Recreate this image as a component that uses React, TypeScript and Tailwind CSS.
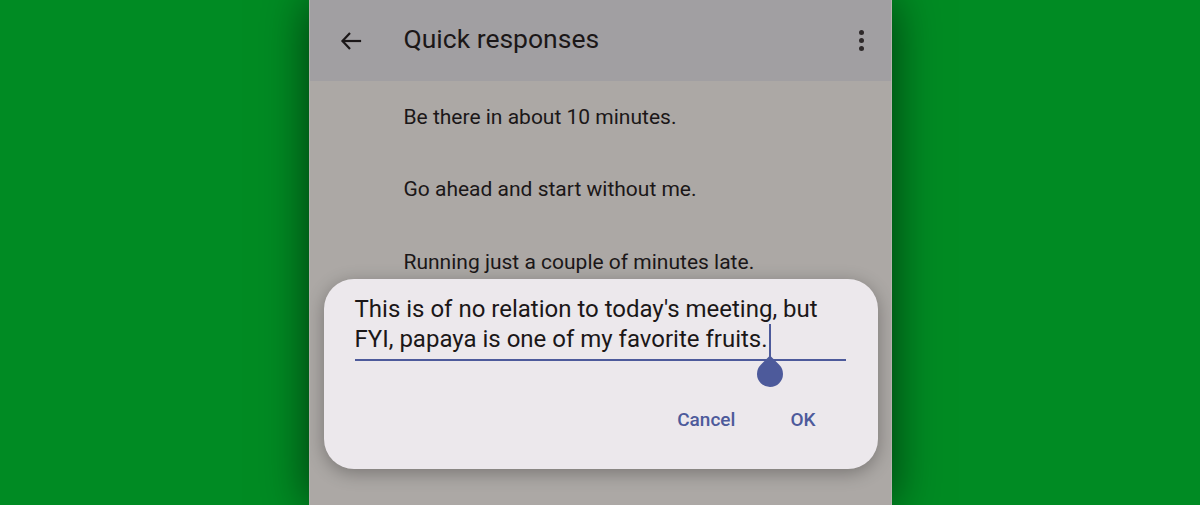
import React from "react";

export default function App() {
  const items = [
    "Be there in about 10 minutes.",
    "Go ahead and start without me.",
    "Running just a couple of minutes late.",
  ];
  return (
    <div className="w-[1200px] h-[505px] bg-[#008b23] flex justify-center overflow-hidden" style={{ fontFamily: "Roboto, 'Open Sans', sans-serif" }}>
      <div className="relative w-[583px] h-full bg-[#aca8a5] flex flex-col shadow-[0_0_45px_rgba(0,0,0,0.6)] border-x border-[#b8b4b1]">
        <div className="h-[81px] bg-[#a19fa2] flex items-center shrink-0">
          <div className="w-[94px] flex items-center pl-[30px]">
            <svg width="22" height="20" viewBox="0 0 22 20" fill="none" stroke="#1b1718" strokeWidth="2.2" strokeLinecap="square">
              <path d="M20 10H3" />
              <path d="M10 2L2.5 10L10 18" strokeLinecap="butt" />
            </svg>
          </div>
          <div className="flex-1 text-[26.5px] text-[#1b1718] leading-none pb-[2px]">Quick responses</div>
          <div className="w-[56px] flex flex-col items-center gap-[3px] pr-[2px]">
            <span className="w-[5px] h-[5px] rounded-full bg-[#2e292a]" />
            <span className="w-[5px] h-[5px] rounded-full bg-[#2e292a]" />
            <span className="w-[5px] h-[5px] rounded-full bg-[#2e292a]" />
          </div>
        </div>
        <div className="flex flex-col pl-[94px]">
          {items.map((t) => (
            <div key={t} className="h-[72.5px] flex items-center text-[21px] text-[#1b1718]">
              {t}
            </div>
          ))}
        </div>

        <div className="absolute left-[14px] top-[279px] w-[554px] h-[190px] rounded-[30px] bg-[#ece8ec] shadow-[0_4px_18px_rgba(0,0,0,0.3)] px-[31px] pt-[15px] flex flex-col">
          <div className="text-[24px] leading-[30px] text-[#1b1718] whitespace-nowrap">
            This is of no relation to today's meeting, but
            <br />
            FYI, papaya is one of my favorite fruits.
            <span className="relative inline-block w-[3px] h-[30px] align-top">
              <span className="absolute left-[1px] top-0 w-[2px] h-[35px] bg-[#4d5a9b]" />
              <span className="absolute left-[-11px] top-[37px] w-[26px] h-[26px] rounded-full rounded-tl-none rotate-45 bg-[#4d5a9b]" />
            </span>
          </div>
          <div className="mt-[5px] h-[2px] w-[491px] bg-[#4d5a9b]" />
          <div className="flex justify-end items-center gap-[55px] pr-[31px] mt-[45px] text-[19px] font-medium text-[#4d5a9b]">
            <span>Cancel</span>
            <span>OK</span>
          </div>
        </div>
      </div>
    </div>
  );
}
